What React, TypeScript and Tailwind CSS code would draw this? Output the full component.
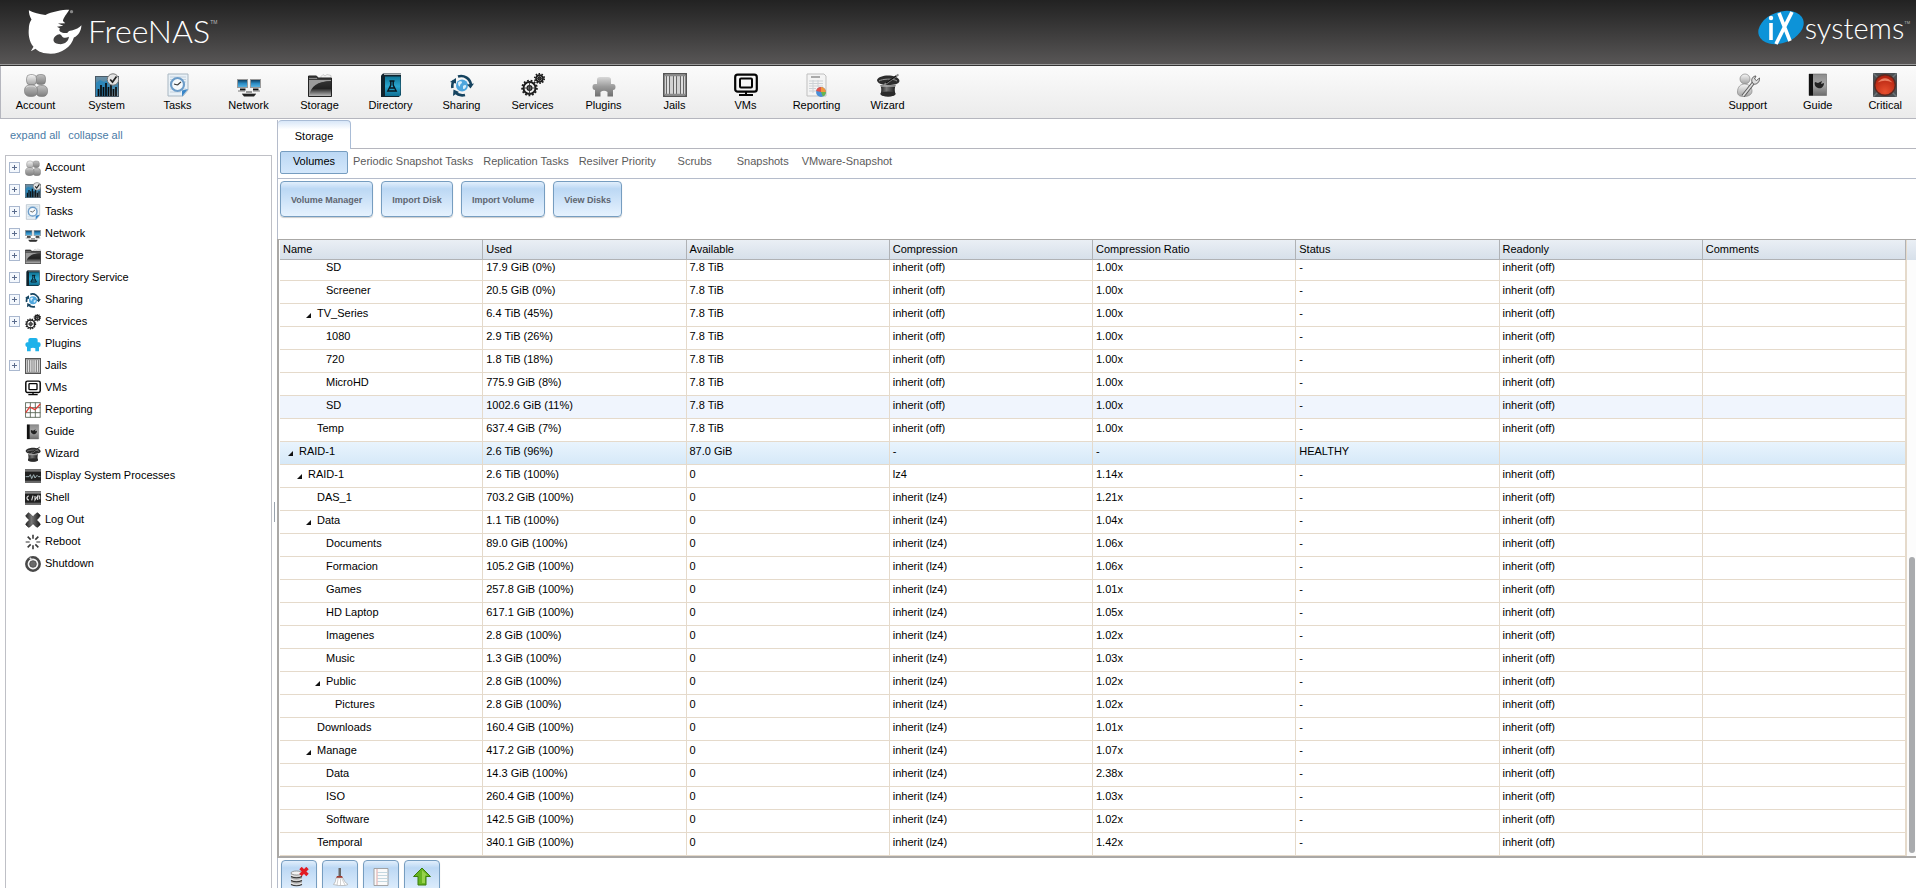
import type { ReactNode } from "react";

type IconProps = { name: string; size?: "lg" | "sm" };

const gear = (cx: number, cy: number, r: number, teeth: number) => (
  <g>
    <circle cx={cx} cy={cy} r={r} fill="none" stroke="#1c1c1c" strokeWidth="2" />
    <circle
      cx={cx}
      cy={cy}
      r={r + 1.4}
      fill="none"
      stroke="#1c1c1c"
      strokeWidth="1.8"
      strokeDasharray={`${(Math.PI * (r + 1.4)) / teeth} ${(Math.PI * (r + 1.4)) / teeth}`}
    />
    <circle cx={cx} cy={cy} r={r * 0.4} fill="#8a8a8a" stroke="#1c1c1c" strokeWidth="1.2" />
    <path
      d={`M${cx - r} ${cy}H${cx + r}M${cx} ${cy - r}V${cy + r}`}
      stroke="#333"
      strokeWidth="0.9"
    />
  </g>
);

const drawings: Record<string, ReactNode> = {
  account: (
    <g stroke="#777" strokeWidth="0.6">
      <rect x="12" y="1.5" width="9.500" height="10" rx="3.500" fill="url(#darkSilver)" />
      <rect x="12" y="12.5" width="11.5" height="11" rx="4.5" fill="url(#darkSilver)" />
      <rect x="2.500" y="1.5" width="10" height="10.500" rx="4" fill="url(#silver)" />
      <rect x="0.5" y="12" width="13" height="11.5" rx="5" fill="url(#darkSilver)" />
      <path d="M2 14.5c2-2 8-2 10 0" stroke="#eee" fill="none" />
    </g>
  ),
  system: (
    <g>
      <rect x="0.5" y="3.5" width="23" height="20" fill="url(#steel)" stroke="#4a5a66" />
      <path d="M1 10l4-3 4 2 4-2v16H1z" fill="#2d86b8" />
      <path
        d="M3.5 23V16M6 23V12M8.5 23V14M11 23V10M13.500 23V14M16 23V12M18.500 23V16M21 23V14"
        stroke="#0b0b0b"
        strokeWidth="1.7"
      />
      <circle cx="18" cy="6.500" r="5.700" fill="#e4e4e4" stroke="#777" />
      <path d="M15.200 6.500l2.300 2.600 4-5.600" fill="none" stroke="#222" strokeWidth="1.700" />
    </g>
  ),
  tasks: (
    <g>
      <path d="M2 1h20v16l-5 6H2z" fill="#e9f1f7" stroke="#a9b7c2" />
      <path d="M4 4h16M4 6.500h16M4 9h16M4 16h16M4 19h11" stroke="#b9cad8" strokeWidth="0.8" />
      <circle cx="11.500" cy="11.500" r="6.500" fill="#f6fafd" stroke="#6d9dc9" strokeWidth="2.200" />
      <path d="M11.500 12l3.500-3.200M11.500 12l-3.500-1" stroke="#333" strokeWidth="1.100" />
      <path d="M22 16l-6 7.500 0-6z" fill="#3a86c8" />
    </g>
  ),
  network: (
    <g>
      <rect x="0.500" y="6.500" width="10" height="8" fill="url(#screen)" stroke="#999" />
      <rect x="13.500" y="6.500" width="10" height="8" fill="url(#screen)" stroke="#999" />
      <path d="M3 16.500h5.500M16 16.500h5.500" stroke="#111" strokeWidth="2" />
      <path d="M1 18h7M16 18h7" stroke="#777" strokeWidth="1" />
      <path d="M9 18h6v3H9z" fill="#999" />
      <path d="M5 21h14l-2 2.500H7z" fill="#222" />
      <path d="M5 20.500h14" stroke="#aaa" />
    </g>
  ),
  storage: (
    <g>
      <path d="M13 3.500l2-2 2 1.500 2-1.500 4 1v5H13z" fill="#f3f3f3" stroke="#bbb" strokeWidth="0.700" />
      <path d="M0.500 3h8l1.500 2h13.500v18.500H0.500z" fill="#3d3d3d" stroke="#222" />
      <path d="M1 23V7h22v1C12 8 4 13 2 23z" fill="#9a9a9a" />
      <path d="M1 23C3 13 9 8.500 23 8v15z" fill="url(#folder)" />
      <path d="M1 5.500h8" stroke="#888" />
    </g>
  ),
  directory: (
    <g>
      <path d="M2 2.500l2-2h18v21l-2 2.500H2z" fill="#10222c" />
      <rect x="6" y="3.500" width="15.500" height="19.500" fill="url(#book)" />
      <path d="M5 1.500h17" stroke="#e9f1f4" strokeWidth="0.700" />
      <path
        d="M10.500 8h5M11.800 8v4l-3 6h8.400l-3-6V8M10.300 15h5.400"
        fill="none"
        stroke="#08171f"
        strokeWidth="1.400"
      />
    </g>
  ),
  sharing: (
    <g>
      <circle cx="12" cy="12.500" r="6" fill="#4ea6dd" />
      <path d="M8 9.500c2-2 4-1.500 4 0s-2 1-2 3-2 1-2-3zM13 13c2-2 4-1 3 1s-3 3-3 1z" fill="#d7eefb" />
      <path
        d="M8 3.500A10 10 0 0 1 21 12M15 22A10 10 0 0 1 5 19M2.500 15A10 10 0 0 1 4 7.500"
        fill="none"
        stroke="#15435f"
        strokeWidth="2.600"
      />
      <path d="M24 10.500l-3.500 5-3.500-4zM3 23l.5-6.500L9 19zM0 9l6-4v5.500z" fill="#15435f" />
    </g>
  ),
  services: (
    <g>
      {gear(8.5, 15, 6, 13)}
      {gear(18.5, 5.5, 3.3, 10)}
    </g>
  ),
  plugins: (
    <path
      d="M3 11h2V6.500Q5 4 8 4h8q3 0 3 2.500V11h2q2.500 0 2.500 3t-2.500 3v6.500h-5.500V19q-3.500-2.500-7 0v4.500H3V17Q.5 17 .5 14T3 11z"
      fill="url(#plug)"
    />
  ),
  pluginsBlue: (
    <path
      d="M3 9.500h2V5.500Q5 3 8 3h8q3 0 3 2.500v4h2q2.500 0 2.500 3.500t-2.500 3.500V23h-5.500v-4.500q-3.500-2-7 0V23H3v-6.500Q.5 16 .5 13T3 9.500z"
      fill="#1fb2ea"
    />
  ),
  jails: (
    <g>
      <rect x="0.800" y="0.800" width="22.400" height="22.400" fill="#d2d2d2" stroke="#555" strokeWidth="1.600" />
      <path d="M5 3v18M12 3v18M19 3v18" stroke="#666" strokeWidth="4" />
      <path d="M5 3v18M12 3v18M19 3v18" stroke="#f2f2f2" strokeWidth="1.700" />
      <path d="M2 2.500h20M2 21.500h20" stroke="#8b8b8b" strokeWidth="1.400" />
    </g>
  ),
  vms: (
    <g fill="none" stroke="#050505">
      <rect x="1.200" y="1.700" width="21.600" height="17" rx="2.500" strokeWidth="2.200" />
      <rect x="6" y="5.500" width="12" height="9" rx="1" strokeWidth="2" />
      <path d="M12 18.500v3M5 22h14" strokeWidth="2" />
    </g>
  ),
  reporting: (
    <g>
      <path d="M2 1h17l2 2v20H2z" fill="#f4f4f4" stroke="#bfbfbf" />
      <path d="M6 4h9" stroke="#777" strokeWidth="1.200" />
      <path d="M4 8h14M4 10.500h14M4 13h14M4 15.500h7M4 18h7M8 7v13M13 7v7" stroke="#cdd2d6" />
      <circle cx="16" cy="19" r="4.900" fill="#4a8fd6" />
      <path d="M16 19v-4.900a4.900 4.900 0 0 0-4.800 4z" fill="#e0524a" />
      <path d="M16 19v-4.900a4.900 4.900 0 0 1 4.900 4.900z" fill="#f0973c" />
      <path d="M16 19h4.900a4.900 4.900 0 0 1-3 4.500z" fill="#69b54c" />
    </g>
  ),
  chart: (
    <g fill="none">
      <rect x="0.800" y="0.800" width="22.400" height="22.400" fill="#fff" />
      <path
        d="M.8 23.200V.8M8 23.200V.8M15.500 23.200V.8M22.800 23.200V.8M.8 1h22.400M.8 8.500h22.400M.8 16h22.400M.8 23h22.400"
        stroke="#566352"
        strokeWidth="1.300"
      />
      <path d="M1 16l6-8.500 8 4L23 3" stroke="#e0413a" strokeWidth="2" />
    </g>
  ),
  wizard: (
    <g>
      <path d="M4.500 12h15c-1 4-1 6 0 9-2 3.500-13 3.500-15 0 1-3 1-5 0-9z" fill="url(#hat)" />
      <ellipse cx="12" cy="21" rx="7.500" ry="2.600" fill="#2b2b2b" />
      <path d="M1 7c1-3 6-4.500 11-4.500S23 4 23.500 8c-.5 3-5 4-11.500 4S1 10 1 7z" fill="#2c2c2c" />
      <path d="M3 8c3-2 14-3 18 0" stroke="#999" fill="none" strokeWidth="1" />
      <path d="M8 12L22.500 1.500" stroke="#888" strokeWidth="1.800" />
      <path d="M10 10L20 3" stroke="#111" strokeWidth="1.300" />
      <path d="M5 13h14" stroke="#bbb" strokeWidth="1.200" />
    </g>
  ),
  support: (
    <g>
      <circle cx="9" cy="6" r="5" fill="url(#silver)" stroke="#888" strokeWidth="0.700" />
      <path
        d="M1.500 19c0-5 3-8 7-8s7.500 3 7.500 7-4 5.500-8 5.500-6.500-1-6.500-4.500z"
        fill="url(#silver)"
        stroke="#888"
        strokeWidth="0.700"
      />
      <path d="M7 23L18 9" stroke="#555" strokeWidth="3.600" />
      <path d="M7 23L18 9" stroke="#ddd" strokeWidth="1.800" />
      <path
        d="M16 9c-1-3 1-6 4-6l-1.500 3 2 1.500L23.500 5c.5 4-3 7-6 6z"
        fill="#ddd"
        stroke="#555"
        strokeWidth="0.900"
      />
    </g>
  ),
  guide: (
    <g>
      <path d="M3 1h17.500v21.500H3z" fill="url(#guideCover)" stroke="#666" strokeWidth="0.600" />
      <rect x="3" y="1" width="4" height="21.500" fill="#111" />
      <path d="M9 9l3 1 4-2-1 3 3-1c0 4-3 6-6 5s-4-4-3-6z" fill="#222" />
    </g>
  ),
  critical: (
    <g>
      <rect width="24" height="24" fill="#4b5054" />
      <path d="M0 0l24 24M24 0L0 24" stroke="#6e7477" strokeWidth="1.500" />
      <circle cx="12" cy="12" r="11" fill="#5c2a22" />
      <circle cx="12" cy="12" r="9.600" fill="url(#alert)" />
      <path d="M4.500 9.500Q12 1 19.500 9.500Q12 6 4.500 9.500z" fill="#ec8064" />
    </g>
  ),
  processes: (
    <g>
      <rect y="2" width="24" height="20" fill="#202020" />
      <path d="M0 4h24" stroke="#777" strokeWidth="3" />
      <path d="M0 20h24" stroke="#666" strokeWidth="2" />
      <path d="M1 13h5l2-3 2 6 3-6 2 5 3-4 2 2h3" fill="none" stroke="#9fb3b8" strokeWidth="1.500" />
    </g>
  ),
  shell: (
    <g>
      <rect y="2" width="24" height="20" fill="#202020" />
      <path d="M0 4h24" stroke="#8a8a8a" strokeWidth="3" />
      <path d="M0 20h24" stroke="#666" strokeWidth="2" />
      <path
        d="M6 9c-4 0-4 6 0 6M12 8.500l-2 7M15 9v6l4-6v6M20 9h2v5"
        fill="none"
        stroke="#ddd"
        strokeWidth="1.700"
      />
    </g>
  ),
  logout: (
    <path
      d="M1 5.500L5 1q1 0 7 6 5-6 7-6l4 4q0 2-5.500 7 5.500 5 5.500 7l-4 4q-2 0-7-5.500-5 6-7 5.500l-4-4q0-2 5.500-7Q1 7 1 5.500z"
      fill="url(#hat)"
      stroke="#222"
      strokeWidth="0.800"
    />
  ),
  reboot: (
    <g stroke="#3a3a3a" strokeWidth="2.400">
      <path d="M12 1v6M12 17v6" />
      <path d="M1 12h6M17 12h6" stroke="#777" />
      <path d="M4 4l4.500 4.500M15.500 15.500L20 20M20 4l-4.500 4.500M8.500 15.500L4 20" />
    </g>
  ),
  shutdown: (
    <g>
      <circle cx="12" cy="12" r="10" fill="#f4f4f4" stroke="#484848" strokeWidth="3.800" />
      <circle cx="12" cy="12" r="5" fill="#6a6a6a" stroke="#444" strokeWidth="1.200" />
      <path d="M7 2.500l4 3.500" stroke="#ddd" strokeWidth="2" />
    </g>
  ),
};

function Icon({ name, size = "lg" }: IconProps) {
  return (
    <svg viewBox="0 0 24 24" aria-hidden="true" className={size === "lg" ? "size-6 shrink-0" : "size-4 shrink-0"}>
      {drawings[name]}
    </svg>
  );
}

function Gradients() {
  const vertical = (id: string, stops: string[]) => (
    <linearGradient id={id} x1="0" y1="0" x2="0" y2="1">
      {stops.map((color, i) => (
        <stop key={i} offset={i / (stops.length - 1)} stopColor={color} />
      ))}
    </linearGradient>
  );
  return (
    <svg className="absolute size-0" aria-hidden="true">
      <defs>
        {vertical("silver", ["#f6f6f6", "#a2a2a2"])}
        {vertical("darkSilver", ["#c2c2c2", "#7d7d7d"])}
        {vertical("steel", ["#6f8fa3", "#3f86ad", "#8fa2ad"])}
        {vertical("screen", ["#0d3350", "#2a8bc4", "#5fb8e4"])}
        {vertical("folder", ["#333333", "#222222", "#b8b8b8"])}
        {vertical("book", ["#0f7596", "#2aa6cf", "#0e6f93"])}
        {vertical("plug", ["#d8d8d8", "#9a9a9a", "#6f6f6f"])}
        {vertical("guideCover", ["#8c8c8c", "#a8a8a8", "#6c6c6c"])}
        <linearGradient id="hat" x1="0" y1="0" x2="1" y2="0">
          <stop offset="0" stopColor="#222" />
          <stop offset="0.4" stopColor="#777" />
          <stop offset="1" stopColor="#1a1a1a" />
        </linearGradient>
        <radialGradient id="alert" cx="0.5" cy="0.85" r="0.8">
          <stop offset="0" stopColor="#e8502f" />
          <stop offset="1" stopColor="#b3220f" />
        </radialGradient>
      </defs>
    </svg>
  );
}

const mainTools = [
  ["Account", "account"],
  ["System", "system"],
  ["Tasks", "tasks"],
  ["Network", "network"],
  ["Storage", "storage"],
  ["Directory", "directory"],
  ["Sharing", "sharing"],
  ["Services", "services"],
  ["Plugins", "plugins"],
  ["Jails", "jails"],
  ["VMs", "vms"],
  ["Reporting", "reporting"],
  ["Wizard", "wizard"],
];

const sideTools = [
  ["Support", "support"],
  ["Guide", "guide"],
  ["Critical", "critical"],
];

const treeItems: [string, string, boolean][] = [
  ["Account", "account", true],
  ["System", "system", true],
  ["Tasks", "tasks", true],
  ["Network", "network", true],
  ["Storage", "storage", true],
  ["Directory Service", "directory", true],
  ["Sharing", "sharing", true],
  ["Services", "services", true],
  ["Plugins", "pluginsBlue", false],
  ["Jails", "jails", true],
  ["VMs", "vms", false],
  ["Reporting", "chart", false],
  ["Guide", "guide", false],
  ["Wizard", "wizard", false],
  ["Display System Processes", "processes", false],
  ["Shell", "shell", false],
  ["Log Out", "logout", false],
  ["Reboot", "reboot", false],
  ["Shutdown", "shutdown", false],
];

const subTabs = [
  "Volumes",
  "Periodic Snapshot Tasks",
  "Replication Tasks",
  "Resilver Priority",
  "Scrubs",
  "Snapshots",
  "VMware-Snapshot",
];

const columns = ["Name", "Used", "Available", "Compression", "Compression Ratio", "Status", "Readonly", "Comments"];

type Row = {
  level: number;
  name: string;
  used: string;
  avail: string;
  comp: string;
  ratio: string;
  open?: boolean;
  tone?: "hover" | "selected";
  status?: string;
  readonly?: string;
};

const off = "inherit (off)";
const lz = "inherit (lz4)";

const rows: Row[] = [
  { level: 3, name: "SD", used: "17.9 GiB (0%)", avail: "7.8 TiB", comp: off, ratio: "1.00x" },
  { level: 3, name: "Screener", used: "20.5 GiB (0%)", avail: "7.8 TiB", comp: off, ratio: "1.00x" },
  { level: 2, name: "TV_Series", used: "6.4 TiB (45%)", avail: "7.8 TiB", comp: off, ratio: "1.00x", open: true },
  { level: 3, name: "1080", used: "2.9 TiB (26%)", avail: "7.8 TiB", comp: off, ratio: "1.00x" },
  { level: 3, name: "720", used: "1.8 TiB (18%)", avail: "7.8 TiB", comp: off, ratio: "1.00x" },
  { level: 3, name: "MicroHD", used: "775.9 GiB (8%)", avail: "7.8 TiB", comp: off, ratio: "1.00x" },
  { level: 3, name: "SD", used: "1002.6 GiB (11%)", avail: "7.8 TiB", comp: off, ratio: "1.00x", tone: "hover" },
  { level: 2, name: "Temp", used: "637.4 GiB (7%)", avail: "7.8 TiB", comp: off, ratio: "1.00x" },
  {
    level: 0,
    name: "RAID-1",
    used: "2.6 TiB (96%)",
    avail: "87.0 GiB",
    comp: "-",
    ratio: "-",
    open: true,
    tone: "selected",
    status: "HEALTHY",
    readonly: "",
  },
  { level: 1, name: "RAID-1", used: "2.6 TiB (100%)", avail: "0", comp: "lz4", ratio: "1.14x", open: true },
  { level: 2, name: "DAS_1", used: "703.2 GiB (100%)", avail: "0", comp: lz, ratio: "1.21x" },
  { level: 2, name: "Data", used: "1.1 TiB (100%)", avail: "0", comp: lz, ratio: "1.04x", open: true },
  { level: 3, name: "Documents", used: "89.0 GiB (100%)", avail: "0", comp: lz, ratio: "1.06x" },
  { level: 3, name: "Formacion", used: "105.2 GiB (100%)", avail: "0", comp: lz, ratio: "1.06x" },
  { level: 3, name: "Games", used: "257.8 GiB (100%)", avail: "0", comp: lz, ratio: "1.01x" },
  { level: 3, name: "HD Laptop", used: "617.1 GiB (100%)", avail: "0", comp: lz, ratio: "1.05x" },
  { level: 3, name: "Imagenes", used: "2.8 GiB (100%)", avail: "0", comp: lz, ratio: "1.02x" },
  { level: 3, name: "Music", used: "1.3 GiB (100%)", avail: "0", comp: lz, ratio: "1.03x" },
  { level: 3, name: "Public", used: "2.8 GiB (100%)", avail: "0", comp: lz, ratio: "1.02x", open: true },
  { level: 4, name: "Pictures", used: "2.8 GiB (100%)", avail: "0", comp: lz, ratio: "1.02x" },
  { level: 2, name: "Downloads", used: "160.4 GiB (100%)", avail: "0", comp: lz, ratio: "1.01x" },
  { level: 2, name: "Manage", used: "417.2 GiB (100%)", avail: "0", comp: lz, ratio: "1.07x", open: true },
  { level: 3, name: "Data", used: "14.3 GiB (100%)", avail: "0", comp: lz, ratio: "2.38x" },
  { level: 3, name: "ISO", used: "260.4 GiB (100%)", avail: "0", comp: lz, ratio: "1.03x" },
  { level: 3, name: "Software", used: "142.5 GiB (100%)", avail: "0", comp: lz, ratio: "1.02x" },
  { level: 2, name: "Temporal", used: "340.1 GiB (100%)", avail: "0", comp: lz, ratio: "1.42x" },
];

const indents = ["pl-2", "pl-[17px]", "pl-[26px]", "pl-[35px]", "pl-[44px]"];

function Header() {
  return (
    <header className="flex h-[66px] shrink-0 items-start justify-between border-b border-[#333] bg-linear-to-b from-[#222] to-[#595757] pl-7 pr-1.5 shadow-[inset_0_-1px_0_#9a9a9a]">
      <div className="flex items-start pt-[9px] text-white">
        <svg viewBox="84 26 162 136" className="h-[45px] w-[54px]" role="img" aria-label="Shark">
          <path
            fill="#fff"
            fillRule="evenodd"
            d="M86 30C100 38 118 42 136 44C155 34 185 28 208 28C200 42 190 52 189 62L196 69L174 70L190 77L171 80L180 85C172 94 190 101 203 98C206 92 212 90 216 91C228 88 238 82 245 75C244 92 236 106 222 112C215 140 185 161 152 161C130 161 115 155 106 146L92 154L100 140C86 125 84 100 86 85C86 70 92 62 94 58C88 48 86 38 86 30ZM172 104C156 112 156 130 176 132C194 134 206 124 207 110C198 114 190 114 186 108C182 102 178 101 172 104Z"
          />
          <circle cx="215" cy="34" r="5" fill="#888" />
        </svg>
        <span className="ml-1.5 font-['Lato'] text-[32px] leading-[44px] font-light">FreeNAS</span>
        <span className="pt-[9px] font-['Liberation_Sans'] text-[5px] leading-2 text-[#bbb]">TM</span>
      </div>
      <div className="flex items-start pt-[9px] text-white">
        <svg viewBox="0 0 46 36" className="h-9 w-[46px]" role="img" aria-label="iX">
          <ellipse cx="23" cy="18.500" rx="23.500" ry="15.500" fill="#0d93d8" transform="rotate(-20 23 18.500)" />
          <path d="M13 14v17M18 35L34 3M21 4l11 28" fill="none" stroke="#fff" strokeWidth="3.600" />
          <circle cx="13" cy="9" r="2.200" fill="#fff" />
        </svg>
        <span className="ml-px font-['Lato'] text-[29px] leading-[38px] font-light">systems</span>
        <span className="pt-3 font-['Liberation_Sans'] text-[4px] leading-1 text-[#bbb]">TM</span>
      </div>
    </header>
  );
}

function Tool({ label, icon }: { label: string; icon: string }) {
  return (
    <button type="button" className="flex w-full flex-col items-center gap-px leading-[14px]">
      <Icon name={icon} />
      {label}
    </button>
  );
}

function Toolbar() {
  return (
    <nav className="flex h-[53px] shrink-0 justify-between border-b border-l border-[#b5b6be] bg-linear-to-b from-[#fbfbfb] to-[#ebebeb] pt-[7px]">
      <ul className="-ml-px flex">
        {mainTools.map(([label, icon]) => (
          <li key={label} className="w-[71px]">
            <Tool label={label} icon={icon} />
          </li>
        ))}
      </ul>
      <ul className="flex gap-9 pr-[14px]">
        {sideTools.map(([label, icon]) => (
          <li key={label}>
            <Tool label={label} icon={icon} />
          </li>
        ))}
      </ul>
    </nav>
  );
}

function Sidebar() {
  return (
    <aside className="flex w-[272px] shrink-0 flex-col pl-[5px]">
      <div className="flex h-9 items-center gap-2 pl-[5px] pb-1 text-[#4a7ba6]">
        <a href="#expand">expand all</a>
        <a href="#collapse">collapse all</a>
      </div>
      <ul className="flex-1 border border-b-0 border-[#bfc0c6]">
        {treeItems.map(([label, icon, expandable]) => (
          <li key={label} className="flex h-[22px] items-center pl-[3px]">
            {expandable ? (
              <button
                type="button"
                aria-label={`Expand ${label}`}
                className="flex size-[11px] items-center justify-center border border-[#aab8cf] bg-[#f4f8fd]"
              >
                <svg viewBox="0 0 5 5" className="size-[5px]" aria-hidden="true">
                  <path d="M0 2.500h5M2.500 0v5" stroke="#5a6b8c" />
                </svg>
              </button>
            ) : (
              <span className="w-[11px]" />
            )}
            <a href={`#${icon}`} className="ml-[5px] flex items-center gap-1 leading-[14px]">
              <span className="pt-0.5">
                <Icon name={icon} size="sm" />
              </span>
              {label}
            </a>
          </li>
        ))}
      </ul>
    </aside>
  );
}

function Tabs() {
  return (
    <>
      <div className="flex h-[29px] border-l border-[#b5bccb]" role="tablist" aria-label="Pages">
        <button
          type="button"
          role="tab"
          aria-selected="true"
          className="w-[73px] rounded-t-sm border border-b-0 border-l-0 border-[#a9bcd6] bg-linear-to-b from-[#d9e7f8] to-white to-30% pt-0.5"
        >
          Storage
        </button>
        <span className="flex-1 border-b border-[#b5b6be]" />
      </div>
      <div
        className="flex h-[30px] border-b border-l border-[#b5bccb] pt-[2px] pl-0.5 text-[#5b5b5b]"
        role="tablist"
        aria-label="Storage sections"
      >
        {subTabs.map((tab, i) => (
          <button
            key={tab}
            type="button"
            role="tab"
            aria-selected={i === 0}
            className={
              i === 0
                ? "h-[23px] w-[68px] rounded-xs border border-[#769dc0] bg-linear-to-b from-[#bcd8f4] to-[#d3e7fb] pb-[3px] text-black"
                : "h-[23px] min-w-[68px] px-[5px] pb-[3px]"
            }
          >
            {tab}
          </button>
        ))}
      </div>
    </>
  );
}

const buttonStyle =
  "rounded border border-[#769dc0] bg-linear-to-b from-[#e2effc] from-0% via-[#bcd8f4] via-20% to-[#e6f2fe] shadow-[0_1px_1px_rgba(0,0,0,0.2)]";

function Cell({ children, first }: { children?: ReactNode; first: boolean }) {
  return (
    <td className="border-r border-b border-[#e5dacb] p-0 align-top">
      <div className={first ? "pl-[3px] leading-[14px]" : "pt-0.5 pl-[3px] leading-[14px]"}>{children}</div>
    </td>
  );
}

function VolumeTable() {
  return (
    <div className="flex min-h-0 flex-1 border-t border-b-2 border-l-2 border-[#aaa8a6] pl-px">
      <div className="min-w-0 flex-1 overflow-hidden">
        <table className="w-full table-fixed border-separate border-spacing-0 border-r border-[#e5dacb]">
          <thead>
            <tr className="h-5">
              {columns.map((column) => (
                <th
                  key={column}
                  className="border-r border-b border-[#b0b2b5] bg-linear-to-b from-[#eaeff5] to-[#d7e0ea] p-0 pb-0.5 pl-[3px] text-left leading-[14px] font-normal"
                >
                  {column}
                </th>
              ))}
            </tr>
          </thead>
          <tbody>
            {rows.map((row, i) => (
              <tr
                key={i}
                className={
                  i === 0
                    ? "h-[21px]"
                    : row.tone === "selected"
                      ? "h-[23px] bg-linear-to-b from-[#e9f4fd] to-[#d5e8f8]"
                      : row.tone === "hover"
                        ? "h-[23px] bg-[#f0f5fd]"
                        : "h-[23px]"
                }
              >
                <Cell first={i === 0}>
                  <span className={`flex items-center ${indents[row.level]}`}>
                    {row.open ? (
                      <svg viewBox="0 0 5 5" className="mt-1 -ml-[3px] mr-1.5 size-[5px]" aria-hidden="true">
                        <path d="M5 0v5H0z" fill="#111" />
                      </svg>
                    ) : (
                      <span className="w-2" />
                    )}
                    {row.name}
                  </span>
                </Cell>
                <Cell first={i === 0}>{row.used}</Cell>
                <Cell first={i === 0}>{row.avail}</Cell>
                <Cell first={i === 0}>{row.comp}</Cell>
                <Cell first={i === 0}>{row.ratio}</Cell>
                <Cell first={i === 0}>{row.status ?? "-"}</Cell>
                <Cell first={i === 0}>{row.readonly ?? off}</Cell>
                <Cell first={i === 0} />
              </tr>
            ))}
          </tbody>
        </table>
      </div>
      <div className="flex w-[9px] flex-col bg-[#fcfcfc]">
        <div className="h-5 bg-linear-to-b from-[#eaeff5] to-[#d7e0ea]" />
        <div className="flex min-h-0 flex-1 flex-col justify-end pr-px pb-[3px] pl-0.5">
          <div className="h-1/2 rounded-full bg-[#a9abae]" />
        </div>
      </div>
    </div>
  );
}

function FooterButton({ label, children }: { label: string; children: ReactNode }) {
  return (
    <button
      type="button"
      aria-label={label}
      className={`flex h-9 w-9 shrink-0 items-start justify-center pt-1.5 ${buttonStyle}`}
    >
      <svg viewBox="0 0 20 20" className="size-5" aria-hidden="true">
        {children}
      </svg>
    </button>
  );
}

function Footer() {
  return (
    <footer className="flex h-[30px] shrink-0 items-start gap-[5px] overflow-hidden border-l border-[#b5bccb] pt-0.5 pl-[3px]">
      <FooterButton label="Detach volume">
        <path d="M2 6h11v12H2z" fill="#aaa" />
        <ellipse cx="7.500" cy="6" rx="5.500" ry="2" fill="#f2f2f2" stroke="#777" strokeWidth="0.700" />
        <path
          d="M2 9.500q5.500 2.500 11 0M2 13.500q5.500 2.500 11 0M2 17.500q5.500 2.500 11 0"
          fill="none"
          stroke="#333"
          strokeWidth="1.200"
        />
        <path
          d="M2 8q5.500 2.500 11 0M2 12q5.500 2.500 11 0M2 16q5.500 2.500 11 0"
          fill="none"
          stroke="#eee"
          strokeWidth="1.200"
        />
        <path d="M11.500 1l7 7M18.500 1l-7 7" stroke="#e21b23" strokeWidth="3.400" />
      </FooterButton>
      <FooterButton label="Scrub volume">
        <path d="M8.500 1h2.500v8H8.500z" fill="#666" />
        <path d="M7 9h5l1 2H6z" fill="#a33b32" />
        <path
          d="M6 11h7q1 4 5 6.500-3 1.500-6 1-3 .5-8.500-1Q6 15 6 11z"
          fill="#fff"
          stroke="#aaa"
          strokeWidth="0.700"
        />
        <path d="M8 12l-1 6M10.500 12v6M12 12l3 6" stroke="#bbb" strokeWidth="0.700" />
      </FooterButton>
      <FooterButton label="Edit options">
        <path d="M3 1.500h14v17H3z" fill="#fafafa" stroke="#9a9a9a" strokeWidth="0.900" />
        <path d="M6.500 5.500H17M6.500 8.500H17M6.500 11.500H17M6.500 14.500H17" stroke="#bcd3dc" strokeWidth="0.900" />
        <path d="M6 2v16" stroke="#dc9d9d" strokeWidth="0.900" />
      </FooterButton>
      <FooterButton label="Upgrade volume">
        <path d="M10 1l8.500 8.500H14V18H6V9.500H1.500z" fill="#67b421" stroke="#3b7d0c" strokeWidth="1" />
        <path d="M10 3l5.500 5.500H13V16H10z" fill="#97d24c" />
      </FooterButton>
    </footer>
  );
}

export default function App() {
  return (
    <div className="flex h-screen flex-col overflow-hidden bg-white font-['Liberation_Sans',Arial,sans-serif] text-[11px] text-black">
      <Gradients />
      <Header />
      <Toolbar />
      <div className="flex min-h-0 flex-1">
        <Sidebar />
        <div className="flex w-[5px] shrink-0 items-center justify-center pt-4">
          <span className="h-5 w-px bg-[#9aa3ad]" />
        </div>
        <main className="flex min-w-0 flex-1 flex-col pt-px">
          <Tabs />
          <div className="flex h-[60px] shrink-0 items-start gap-2 border-l border-[#b5bccb] pt-0.5 pl-0.5 text-[9px] font-bold text-[#5f6670]">
            {["Volume Manager", "Import Disk", "Import Volume", "View Disks"].map((label) => (
              <button key={label} type="button" className={`h-9 px-[10px] pt-1 ${buttonStyle}`}>
                {label}
              </button>
            ))}
          </div>
          <VolumeTable />
          <Footer />
        </main>
      </div>
    </div>
  );
}
